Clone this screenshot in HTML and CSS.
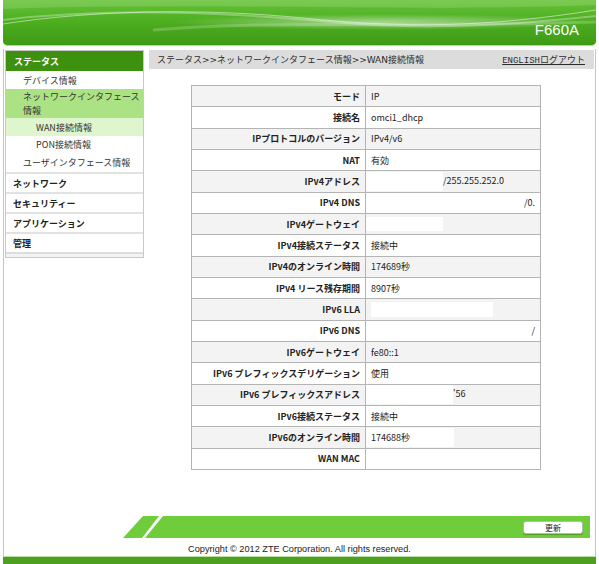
FILE: index.html
```html
<!DOCTYPE html>
<html lang="ja">
<head>
<meta charset="utf-8">
<title>F660A</title>
<link rel="stylesheet" href="styles.css">
</head>
<body>
<div class="page">
  <header class="header">
    <svg class="header-art" viewBox="0 0 593 45" preserveAspectRatio="none" aria-hidden="true">
      <defs>
        <linearGradient id="hg" x1="0" y1="0" x2="0" y2="1">
          <stop offset="0" stop-color="#66c237"/>
          <stop offset="0.45" stop-color="#4eaf21"/>
          <stop offset="1" stop-color="#3d9b14"/>
        </linearGradient>
        <radialGradient id="glow" cx="0.5" cy="0.5" r="0.5">
          <stop offset="0" stop-color="#ffffff" stop-opacity="0.5"/>
          <stop offset="1" stop-color="#ffffff" stop-opacity="0"/>
        </radialGradient>
      </defs>
      <rect width="593" height="45" fill="url(#hg)"/>
      <path d="M0 0H593V5C420 12 200 2 0 9Z" fill="#ffffff" opacity="0.14"/>
      <ellipse cx="380" cy="22" rx="210" ry="8" fill="url(#glow)"/>
      <path d="M0 24C90 10 200 8 300 18S480 28 593 10" stroke="#ffffff" stroke-opacity="0.5" stroke-width="1" fill="none"/>
      <path d="M0 20C120 6 240 14 330 22S500 26 593 16" stroke="#ffffff" stroke-opacity="0.3" stroke-width="2" fill="none"/>
      <path d="M150 30C260 20 380 28 593 22" stroke="#ffffff" stroke-opacity="0.2" stroke-width="3" fill="none"/>
    </svg>
    <div class="model">F660A</div>
  </header>

  <div class="frame">
    <div class="top">
      <nav class="side">
        <div class="side-head">ステータス</div>
        <div class="sub">デバイス情報</div>
        <div class="sub open">ネットワークインタフェース<br>情報</div>
        <div class="subsub current">WAN接続情報</div>
        <div class="subsub">PON接続情報</div>
        <div class="sub last">ユーザインタフェース情報</div>
        <div class="top-item">ネットワーク</div>
        <div class="top-item">セキュリティー</div>
        <div class="top-item">アプリケーション</div>
        <div class="top-item">管理</div>
        <div class="side-end"></div>
      </nav>

      <main class="main">
        <div class="crumb">
          <span class="path">ステータス&gt;&gt;ネットワークインタフェース情報&gt;&gt;WAN接続情報</span>
          <span class="links"><a class="en">ENGLISH</a><a>ログアウト</a></span>
        </div>

        <table class="info">
          <tr><th>モード</th><td>IP</td></tr>
          <tr><th>接続名</th><td>omci1_dhcp</td></tr>
          <tr><th>IPプロトコルのバージョン</th><td>IPv4/v6</td></tr>
          <tr><th>NAT</th><td>有効</td></tr>
          <tr><th>IPv4アドレス</th><td class="masked"><span class="mask m-addr"></span>/255.255.252.0</td></tr>
          <tr><th>IPv4 DNS</th><td class="tail tail-dns4">/0.</td></tr>
          <tr><th>IPv4ゲートウェイ</th><td class="masked"><span class="mask m-gw"></span></td></tr>
          <tr><th>IPv4接続ステータス</th><td>接続中</td></tr>
          <tr><th>IPv4のオンライン時間</th><td>174689秒</td></tr>
          <tr><th>IPv4 リース残存期間</th><td>8907秒</td></tr>
          <tr><th>IPv6 LLA</th><td class="masked"><span class="mask m-lla"></span></td></tr>
          <tr><th>IPv6 DNS</th><td class="tail tail-dns6">/</td></tr>
          <tr><th>IPv6ゲートウェイ</th><td>fe80::1</td></tr>
          <tr><th>IPv6 プレフィックスデリゲーション</th><td>使用</td></tr>
          <tr><th>IPv6 プレフィックスアドレス</th><td class="masked"><span class="mask m-prefix"></span>'56</td></tr>
          <tr><th>IPv6接続ステータス</th><td>接続中</td></tr>
          <tr><th>IPv6のオンライン時間</th><td class="masked"><span class="whiteval">174688秒</span></td></tr>
          <tr><th>WAN MAC</th><td></td></tr>
        </table>
      </main>
    </div>

    <div class="bar">
      <svg class="bar-stripes" width="40" height="22" viewBox="0 0 40 22" aria-hidden="true">
        <polygon points="0,22 20,0 36,0 19,22" fill="#6fcd3c"/>
        <polygon points="22,22 40,0 40,22" fill="#6fcd3c"/>
      </svg>
      <div class="bar-fill"><button class="btn" type="button">更新</button></div>
    </div>

    <div class="copy">Copyright © 2012 ZTE Corporation. All rights reserved.</div>
  </div>
  <div class="bottom-band"></div>
</div>
</body>
</html>
```

FILE: styles.css
```css
* { box-sizing: border-box; }

html, body {
  margin: 0;
  padding: 0;
  background: #ffffff;
}

body {
  font-family: "Noto Sans CJK JP", "Noto Sans", sans-serif;
  font-size: 9px;
  color: #2a2a2a;
  width: 599px;
  height: 564px;
  overflow: hidden;
}

.page {
  margin: 0 3px;
  width: 593px;
  display: flex;
  flex-direction: column;
}

/* Header */
.header {
  display: grid;
  height: 46px;
  border-bottom: 1px solid #a9df86;
  border-radius: 0 0 5px 5px;
  overflow: hidden;
  background: #4eaf21;
}
.header > * { grid-area: 1 / 1; }
.header-art {
  width: 100%;
  height: 45px;
  display: block;
}
.model {
  align-self: end;
  justify-self: end;
  padding: 0 17px 7px 0;
  color: #ffffff;
  font-family: "Liberation Sans", Arial, sans-serif;
  font-size: 15px;
  line-height: 17px;
}

/* Frame */
.frame {
  margin-top: 3px;
  border-left: 1px solid #c4c4c4;
  border-right: 1px solid #c4c4c4;
  padding-top: 1px;
  display: flex;
  flex-direction: column;
  height: 507px;
}

.top {
  display: flex;
  align-items: flex-start;
  height: 466px;
}

/* Sidebar */
.side {
  width: 139px;
  margin-left: 1px;
  border: 1px solid #c9c9c9;
  display: flex;
  flex-direction: column;
  color: #333333;
}
.side-head {
  height: 20px;
  background: #3e900f;
  color: #ffffff;
  font-weight: 700;
  padding-left: 8px;
  display: flex;
  align-items: center;
}
.sub {
  height: 18px;
  padding-left: 17px;
  display: flex;
  align-items: center;
}
.sub.open {
  height: 29px;
  background: #abe283;
  line-height: 14px;
  padding-top: 1px;
}
.sub.last { height: 19px; }
.subsub {
  height: 17px;
  padding-left: 30px;
  display: flex;
  align-items: center;
}
.subsub.current {
  height: 18px;
  background: #dff5cd;
}
.top-item {
  height: 20px;
  border-top: 2px solid #e2e2e2;
  padding-left: 7px;
  font-weight: 700;
  color: #222222;
  display: flex;
  align-items: center;
}
.side-end {
  height: 5px;
  border-top: 2px solid #dcdcdc;
  background: #f3f3f3;
}

/* Main */
.main {
  flex: 1;
  margin-left: 5px;
  margin-right: 1px;
}
.crumb {
  height: 19px;
  background: #dcdcdc;
  display: flex;
  align-items: center;
  justify-content: space-between;
  padding: 0 9px 0 8px;
  color: #2c2c2c;
}
.path {
  font-family: "DejaVu Sans", "Noto Sans CJK JP", sans-serif;
}
.links a {
  color: #2c2c2c;
  text-decoration: underline;
}
.links .en {
  font-family: "Liberation Mono", monospace;
  font-size: 9px;
}

/* Info table */
.info {
  margin: 16px 0 0 42px;
  width: 350px;
  border-collapse: collapse;
  table-layout: fixed;
  border: 1px solid #a9a9a9;
}
.info tr { height: 21.33px; }
.info tr:nth-child(odd) { background: #f3f3f3; }
.info th,
.info td {
  border: 1px solid #b4b4b4;
  padding: 0 5px;
  white-space: nowrap;
  overflow: hidden;
  vertical-align: middle;
}
.info th {
  width: 174px;
  text-align: right;
  font-weight: 700;
  color: #222222;
}
.info td {
  text-align: left;
  font-weight: 400;
  color: #222222;
}
.info td.masked { padding-left: 0; }
.mask {
  display: inline-block;
  vertical-align: middle;
  background: #ffffff;
}
.m-addr { width: 77px; height: 19px; }
.m-gw { width: 77px; height: 14px; }
.m-lla { width: 122px; height: 15px; margin-left: 5px; }
.m-prefix { width: 87px; height: 19px; }
.whiteval {
  display: inline-block;
  width: 88px;
  height: 19px;
  line-height: 19px;
  padding-left: 5px;
  background: #ffffff;
}
.info td.tail { text-align: right; }
.tail-dns4 { padding-right: 12px; }
.tail-dns6 { padding-right: 8px; }

/* Footer bar */
.bar {
  display: flex;
  height: 22px;
  margin: 0 5px 0 119px;
}
.bar-stripes {
  display: block;
  flex: none;
}
.bar-fill {
  flex: 1;
  background: #6fcd3c;
  display: flex;
  align-items: center;
  justify-content: flex-end;
  padding-right: 7px;
}
.btn {
  width: 60px;
  height: 13px;
  padding: 0;
  border: 1px solid #b9b9b9;
  border-radius: 3px;
  background: #ffffff;
  box-shadow: 0 1px 1px rgba(0, 0, 0, 0.25);
  font-family: "Noto Sans CJK JP", sans-serif;
  font-size: 8px;
  line-height: 11px;
  color: #222222;
}

.copy {
  height: 18px;
  padding-top: 6px;
  text-align: center;
  font-family: "Liberation Sans", Arial, sans-serif;
  font-size: 9.2px;
  line-height: 11px;
  color: #222222;
}

.bottom-band {
  height: 8px;
  background: #4c9f1f;
  border-top: 1px solid #b9dea1;
}
```
